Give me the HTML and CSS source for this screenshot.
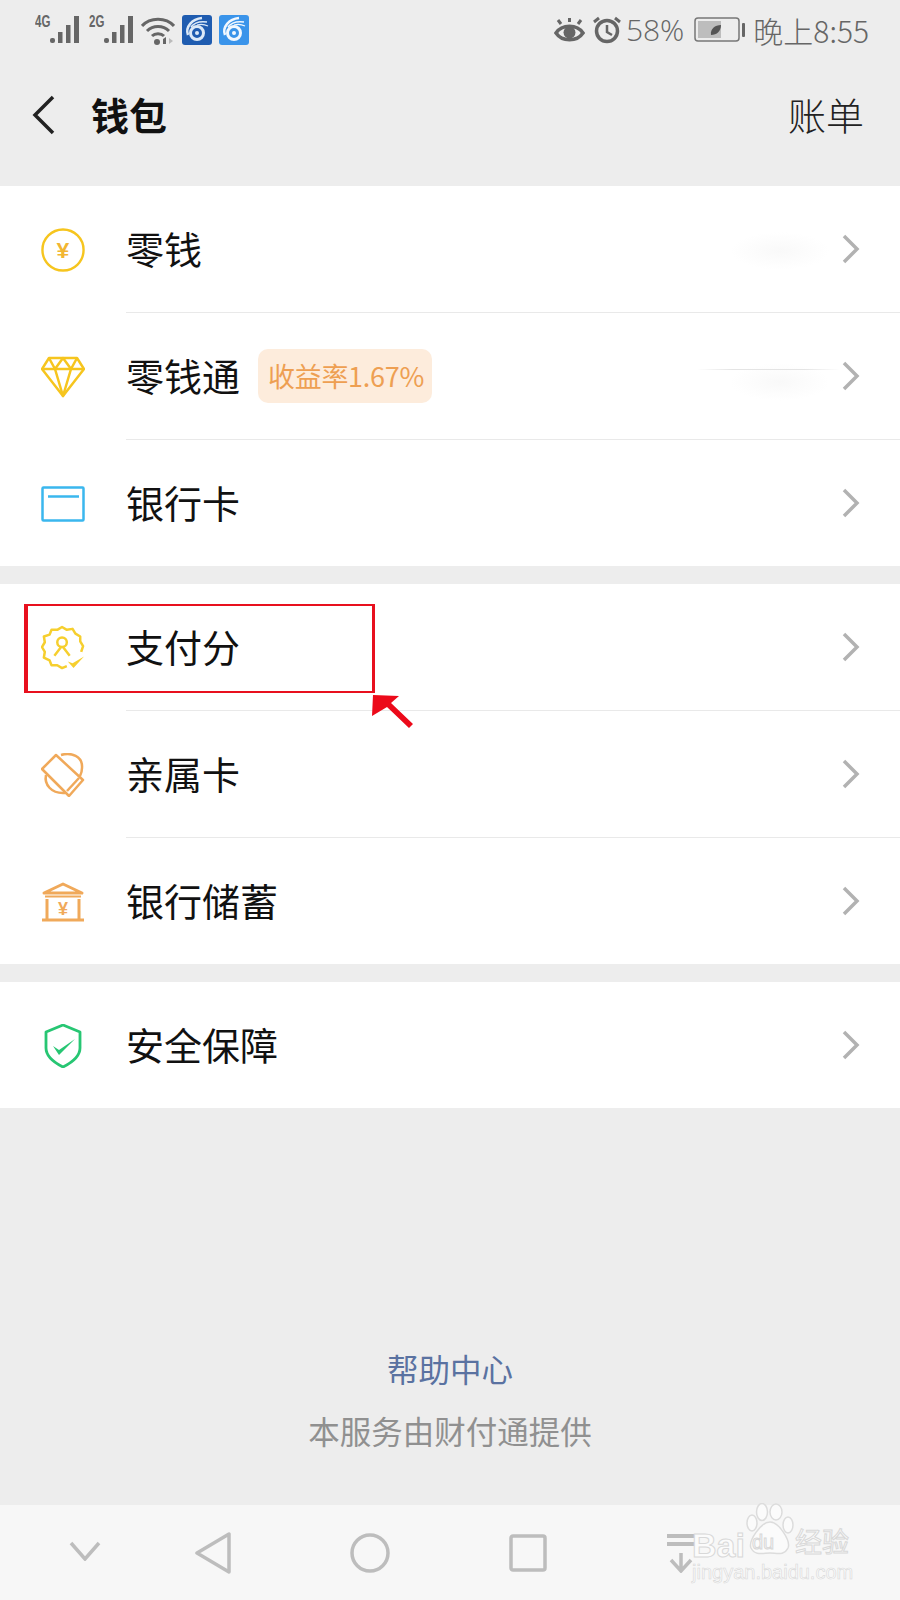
FILE: index.html
```html
<!DOCTYPE html>
<html lang="zh-CN">
<head>
	<meta charset="UTF-8">
	<title>钱包</title>
	<link rel="stylesheet" href="styles.css">
</head>
<body>
	<div class="page">
		<!-- 状态栏 -->
		<div class="statusBar">
			<div class="statusLeft">
				<span class="netType">4G</span>
				<svg width="30" height="28" viewBox="0 0 30 28"><g fill="#666"><rect x="0" y="22" width="5" height="5" rx="2"/><rect x="8" y="16" width="4.500" height="11"/><rect x="16" y="9" width="4.500" height="18"/><rect x="24" y="0" width="5" height="27"/></g></svg>
				<span class="netType second">2G</span>
				<svg width="30" height="28" viewBox="0 0 30 28"><g fill="#666"><rect x="0" y="22" width="5" height="5" rx="2"/><rect x="8" y="16" width="4.500" height="11"/><rect x="16" y="9" width="4.500" height="18"/><rect x="24" y="0" width="5" height="27"/></g></svg>
				<svg class="wifi" width="34" height="28" viewBox="0 0 34 28"><g fill="none" stroke="#666" stroke-width="3"><path d="M1 9C9 0 25 0 33 9"/><path d="M6 14C12 8 22 8 28 14"/><path d="M11 19C14 16 20 16 23 19"/></g><circle cx="16" cy="25" r="3" fill="#666"/><path d="M22 27v-5l3-2v7z" fill="#666"/><path d="M28 21l4 3-4 3z" fill="#bbb"/></svg>
				<svg class="appIcon" width="30" height="30" viewBox="0 0 30 30"><rect width="30" height="30" rx="3" fill="#1f5cb0"/><g fill="none" stroke="#dce9f7"><circle cx="15" cy="18" r="6.500" stroke-width="3"/><path d="M6 20C3 12 10 4 20 3" stroke-width="2.500"/><path d="M9 12C12 8 18 6 25 7" stroke-width="1.600"/><path d="M15 10C18 9 22 9 26 11" stroke-width="1.200"/></g><circle cx="15" cy="18" r="2" fill="#dce9f7"/></svg>
				<svg class="appIcon" width="30" height="30" viewBox="0 0 30 30"><rect width="30" height="30" rx="3" fill="#3a94ea"/><g fill="none" stroke="#f2f8fe"><circle cx="15" cy="18" r="6.500" stroke-width="3"/><path d="M6 20C3 12 10 4 20 3" stroke-width="2.500"/><path d="M9 12C12 8 18 6 25 7" stroke-width="1.600"/><path d="M15 10C18 9 22 9 26 11" stroke-width="1.200"/></g><circle cx="15" cy="18" r="2" fill="#f2f8fe"/></svg>
			</div>
			<div class="statusRight">
				<svg width="31" height="26" viewBox="0 0 31 26"><path d="M2 16C8 7 23 7 29 16C23 25 8 25 2 16Z" fill="none" stroke="#666" stroke-width="3.500"/><circle cx="15.500" cy="15.500" r="6" fill="#666"/><path d="M7 7L4 3M15.500 5V1M24 7L27 3" stroke="#666" stroke-width="3"/></svg>
				<svg class="alarm" width="28" height="28" viewBox="0 0 28 28"><circle cx="14" cy="15" r="10.500" fill="none" stroke="#666" stroke-width="3.500"/><path d="M14 9v7l5 3" fill="none" stroke="#666" stroke-width="2.500"/><path d="M1 6L6 2M27 6L22 2" stroke="#666" stroke-width="3"/></svg>
				<span class="battery">58%</span>
				<svg class="batteryIcon" width="52" height="26" viewBox="0 0 52 26"><rect x="1" y="1" width="44" height="23" rx="3" fill="none" stroke="#777" stroke-width="1.500"/><rect x="4" y="4" width="23" height="17" fill="#bdbdbd"/><path d="M17 18C16 12 21 8 27 8C27 14 23 18 17 18Z" fill="#555"/><rect x="48" y="6" width="3" height="14" rx="1" fill="#666"/></svg>
				<span class="clock">晚上8:55</span>
			</div>
		</div>

		<!-- 标题栏 -->
		<div class="titleBar">
			<svg class="back" width="24" height="40" viewBox="0 0 24 40"><path d="M21 2L3 20L21 38" fill="none" stroke="#222" stroke-width="3.500"/></svg>
			<h1>钱包</h1>
			<span class="bill">账单</span>
		</div>

		<div class="group">
			<div class="row">
				<div class="rowIcon">
					<svg width="46" height="46" viewBox="0 0 46 46"><circle cx="23" cy="23" r="21.500" fill="none" stroke="#f6c51e" stroke-width="2.500"/><text x="23" y="31" class="yen" fill="#f2b632">¥</text></svg>
				</div>
				<div class="rowMain"><span>零钱</span><i class="blurAmount"></i>
					<svg class="arrow" width="18" height="30" viewBox="0 0 18 30"><path d="M2 2L15 15L2 28" fill="none" stroke="#b2b2b2" stroke-width="3.500"/></svg>
				</div>
			</div>
			<div class="row">
				<div class="rowIcon">
					<svg width="44" height="42" viewBox="0 0 44 42"><g fill="none" stroke="#f6c51e" stroke-width="2.500" stroke-linejoin="round"><path d="M8 2H36L43 13L22 40L1 13Z"/><path d="M1 13H43"/><path d="M8 2L14 13L22 40L30 13L36 2"/><path d="M14 13L22 2L30 13"/></g></svg>
				</div>
				<div class="rowMain"><span>零钱通</span><em class="rate">收益率1.67%</em><i class="blurAmount second"></i><i class="blurLine"></i>
					<svg class="arrow" width="18" height="30" viewBox="0 0 18 30"><path d="M2 2L15 15L2 28" fill="none" stroke="#b2b2b2" stroke-width="3.500"/></svg>
				</div>
			</div>
			<div class="row">
				<div class="rowIcon">
					<svg width="44" height="36" viewBox="0 0 44 36"><rect x="1.500" y="1.500" width="41" height="33" rx="1" fill="none" stroke="#3ab7ee" stroke-width="2.500"/><path d="M7 10.500H38" stroke="#3ab7ee" stroke-width="2.500"/></svg>
				</div>
				<div class="rowMain"><span>银行卡</span>
					<svg class="arrow" width="18" height="30" viewBox="0 0 18 30"><path d="M2 2L15 15L2 28" fill="none" stroke="#b2b2b2" stroke-width="3.500"/></svg>
				</div>
			</div>
		</div>

		<div class="group">
			<div class="row">
				<div class="rowIcon">
					<svg width="46" height="46" viewBox="0 0 46 46"><g fill="none" stroke="#f6cf2e" stroke-width="2.600" stroke-linejoin="round"><path d="M27 42L22 44L17 41L11 41L9 36L3 33L4 27L1 22L4 17L3 11L9 9L11 4L17 4L22 1L27 4L33 3L36 8L41 11L41 16L44 21L42 27"/><circle cx="22" cy="17" r="5"/><path d="M21 22L14 31M23 22L30 31"/></g><path d="M28 37L33 39L45 32L34 44Z" fill="#f6cf2e"/></svg>
				</div>
				<div class="rowMain"><span>支付分</span>
					<svg class="arrow" width="18" height="30" viewBox="0 0 18 30"><path d="M2 2L15 15L2 28" fill="none" stroke="#b2b2b2" stroke-width="3.500"/></svg>
				</div>
			</div>
			<div class="row">
				<div class="rowIcon">
					<svg width="44" height="44" viewBox="0 0 44 44"><g fill="none" stroke="#f0a95a" stroke-width="2.500" stroke-linejoin="round"><path d="M1 16L15 2L42 27L28 43Z"/><path d="M20 2C30 -1 42 3 41 15C41 18 40 21 39 23"/><path d="M5 22C3 31 10 41 24 40"/><path d="M26 38L38 25"/></g></svg>
				</div>
				<div class="rowMain"><span>亲属卡</span>
					<svg class="arrow" width="18" height="30" viewBox="0 0 18 30"><path d="M2 2L15 15L2 28" fill="none" stroke="#b2b2b2" stroke-width="3.500"/></svg>
				</div>
			</div>
			<div class="row">
				<div class="rowIcon">
					<svg width="44" height="40" viewBox="0 0 44 40"><g fill="none" stroke="#f0a95a" stroke-width="3" stroke-linejoin="round"><path d="M3 11L22 2L41 11Z"/><path d="M6 17V37M38 17V37M1 38H43"/></g><path d="M4 14.500H40" stroke="#f0a95a" stroke-width="2"/><text x="22" y="33" class="yen small" fill="#f0a95a">¥</text></svg>
				</div>
				<div class="rowMain"><span>银行储蓄</span>
					<svg class="arrow" width="18" height="30" viewBox="0 0 18 30"><path d="M2 2L15 15L2 28" fill="none" stroke="#b2b2b2" stroke-width="3.500"/></svg>
				</div>
			</div>
		</div>

		<div class="group">
			<div class="row">
				<div class="rowIcon">
					<svg width="44" height="44" viewBox="0 0 44 44"><g fill="none" stroke="#27c673" stroke-width="2.800" stroke-linejoin="round"><path d="M22 1L39 8V24C39 32 30 39 22 43C14 39 5 32 5 24V8Z"/></g><path d="M12 22L18 26L34 15L18 31Z" fill="#27c673"/></svg>
				</div>
				<div class="rowMain"><span>安全保障</span>
					<svg class="arrow" width="18" height="30" viewBox="0 0 18 30"><path d="M2 2L15 15L2 28" fill="none" stroke="#b2b2b2" stroke-width="3.500"/></svg>
				</div>
			</div>
		</div>

		<div class="footer">
			<a class="help">帮助中心</a>
			<p class="provider">本服务由财付通提供</p>
		</div>

		<!-- 底部虚拟键 -->
		<div class="navKeys">
			<svg class="keyDown" width="32" height="20" viewBox="0 0 32 20"><path d="M2 2L16 18L30 2" fill="none" stroke="#bdbdbd" stroke-width="3.500"/></svg>
			<svg width="36" height="42" viewBox="0 0 36 42"><path d="M34 2V40L2 21Z" fill="none" stroke="#bdbdbd" stroke-width="3.500" stroke-linejoin="round"/></svg>
			<svg width="40" height="42" viewBox="0 0 40 42"><circle cx="20" cy="21" r="18" fill="none" stroke="#bdbdbd" stroke-width="3.500"/></svg>
			<svg width="38" height="38" viewBox="0 0 38 38"><rect x="2" y="2" width="34" height="34" rx="2" fill="none" stroke="#bdbdbd" stroke-width="3.500"/></svg>
			<svg width="34" height="40" viewBox="0 0 34 40"><path d="M1 3H33M1 11H33" stroke="#bdbdbd" stroke-width="4"/><path d="M15 20V37M5 27L15 38L25 27" fill="none" stroke="#bdbdbd" stroke-width="3.500"/></svg>
		</div>

		<!-- 红框和箭头标注 -->
		<div class="markBox"></div>
		<svg class="markArrow" width="46" height="38" viewBox="0 0 46 38"><path d="M2 1L28 2L20 9L42 30L38 34L16 13L1 22Z" fill="#ec0a1a"/></svg>

		<!-- 水印 -->
		<div class="watermark">
			<svg class="paw" width="50" height="54" viewBox="0 0 50 54"><g fill="#fbfbfb" stroke="#dcdcdc" stroke-width="1.500"><ellipse cx="7" cy="20" rx="5" ry="8"/><ellipse cx="17" cy="9" rx="5.500" ry="8.500"/><ellipse cx="31" cy="9" rx="6" ry="8"/><ellipse cx="43" cy="22" rx="5" ry="8"/><path d="M25 19C34 19 46 38 43 45C39 53 32 50 25 50C18 50 10 53 6 45C3 38 16 19 25 19Z"/></g></svg>
			<span class="wmBai">Bai</span>
			<span class="wmDu">du</span>
			<span class="wmJy">经验</span>
			<span class="wmUrl">jingyan.baidu.com</span>
		</div>
	</div>
</body>
</html>
```

FILE: styles.css
```css
*{box-sizing:border-box;}
body{margin:0;font-family:"Noto Sans CJK SC","Noto Sans",sans-serif;color:#222;}
.page{position:relative;display:flex;flex-direction:column;width:900px;height:1600px;overflow:hidden;background:#ededed;}

.statusBar{display:flex;justify-content:space-between;align-items:center;height:62px;padding:0 31px 2px 35px;color:#666;}
.statusLeft,.statusRight{display:flex;align-items:center;}
.netType{align-self:flex-start;width:15px;margin-top:-1px;font-size:16px;line-height:16px;font-weight:700;font-family:"Liberation Sans",sans-serif;transform:scaleX(0.72);transform-origin:left;white-space:nowrap;}
.netType.second{margin-left:9px;}
.wifi{margin-left:7px;margin-top:1px;}
.appIcon{margin-left:7px;}
.alarm{margin-left:8px;}
.battery{margin-left:5px;font-size:30px;font-weight:300;line-height:36px;font-family:"Open Sans","Noto Sans",sans-serif;}
.batteryIcon{margin-left:10px;}
.clock{margin-left:7px;font-size:30px;font-weight:300;line-height:36px;}

.titleBar{display:flex;align-items:center;height:106px;margin-bottom:18px;padding:0 36px 0 32px;}
.back{margin-right:35px;}
.titleBar h1{margin:0 0 3px;font-size:38px;font-weight:700;line-height:50px;color:#111;}
.bill{margin:0 0 3px auto;font-size:38px;font-weight:300;line-height:50px;}

.group{margin-bottom:18px;background:#fff;}
.group:nth-of-type(5){margin-bottom:0;}
.row{display:flex;height:126px;padding-left:41px;}
.row:not(:last-child){margin-bottom:1px;}
.row:not(:last-child) .rowMain{box-shadow:0 1px 0 #e9e9e9;}
.rowIcon{display:flex;align-items:center;justify-content:center;flex:none;width:44px;margin-right:41px;padding-top:2px;}
.rowMain{position:relative;display:flex;align-items:center;flex:1;padding-right:40px;font-size:38px;color:#111;}
.rowMain span{margin-bottom:2px;line-height:50px;}
.arrow{margin-left:auto;}
.yen{font-size:24px;font-weight:700;text-anchor:middle;font-family:"Liberation Sans",sans-serif;}
.yen.small{font-size:18px;}

.rate{flex:none;width:174px;height:54px;margin-left:18px;padding-left:10px;border-radius:10px;background:#fdecdc;color:#ee9f52;font-size:27px;font-style:normal;line-height:54px;letter-spacing:-0.300px;white-space:nowrap;}
.blurLine{position:absolute;right:60px;top:56px;width:143px;height:1px;background:linear-gradient(to right,#fff,#e4e4e4 25%,#e4e4e4 75%,#fff);}
.blurAmount{position:absolute;right:70px;top:46px;width:100px;height:38px;background:radial-gradient(ellipse,#f9f9f9,#fff 70%);}
.blurAmount.second{top:50px;}

.footer{margin-top:auto;padding-bottom:44px;text-align:center;}
.help{display:block;font-size:31.500px;line-height:62px;color:#5a72a1;}
.provider{margin:0;font-size:31.500px;line-height:62px;color:#909090;}

.navKeys{display:flex;align-items:center;height:95px;padding:0 0 0 69px;gap:119px;background:#f7f7f7;}
.keyDown{margin-right:-25px;margin-top:-4px;}

.markBox{position:absolute;left:24px;top:604px;width:351px;height:89px;border:2px solid #e8101e;border-left-width:4px;border-right-width:3px;}
.markArrow{position:absolute;left:371px;top:694px;}

.watermark{position:absolute;left:686px;top:1500px;width:170px;height:84px;}
.paw{position:absolute;left:59px;top:3px;}
.wmBai,.wmDu,.wmJy,.wmUrl{position:absolute;color:#fbfbfb;-webkit-text-stroke:1px #d8d8d8;font-family:"Liberation Sans",sans-serif;line-height:1;}
.wmBai{left:6px;top:28px;font-size:34px;font-weight:700;}
.wmDu{left:66px;top:32px;font-size:20px;}
.wmJy{left:109px;top:27px;font-size:27px;font-family:"Noto Sans CJK SC",sans-serif;}
.wmUrl{left:6px;top:62px;font-size:20px;-webkit-text-stroke-width:0.600px;}
```
